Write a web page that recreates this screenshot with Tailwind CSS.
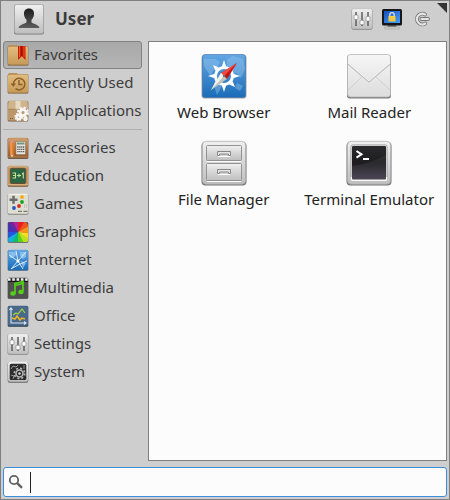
<!DOCTYPE html>
<html lang="en">
<head>
<meta charset="utf-8">
<meta name="viewport" content="width=device-width, initial-scale=1">
<title>Applications</title>
<script src="https://cdn.jsdelivr.net/npm/@tailwindcss/browser@4"></script>
</head>
<body class="bg-[#cecece] font-['Noto_Sans',sans-serif] text-[15px] leading-5 text-[#3c3c3c]">
<svg class="absolute size-0" aria-hidden="true">
  <defs>
    <linearGradient id="silver" x1="0" y1="0" x2="0" y2="1"><stop offset="0" stop-color="#f0f0f0"/><stop offset="1" stop-color="#bebebe"/></linearGradient>
    <linearGradient id="paper" x1="0" y1="0" x2="0" y2="1"><stop offset="0" stop-color="#f6f6f6"/><stop offset="1" stop-color="#dcdcdc"/></linearGradient>
    <linearGradient id="tan" x1="0" y1="0" x2="0" y2="1"><stop offset="0" stop-color="#e2bd80"/><stop offset="1" stop-color="#c69a58"/></linearGradient>
    <linearGradient id="wood" x1="0" y1="0" x2="0" y2="1"><stop offset="0" stop-color="#c99a68"/><stop offset="1" stop-color="#94592c"/></linearGradient>
    <linearGradient id="blue" x1="0" y1="0" x2="0" y2="1"><stop offset="0" stop-color="#62a7e4"/><stop offset="1" stop-color="#1b6cb8"/></linearGradient>
    <linearGradient id="dark" x1="0" y1="0" x2="0" y2="1"><stop offset="0" stop-color="#2a2a2c"/><stop offset=".5" stop-color="#1d1c20"/><stop offset="1" stop-color="#423c4c"/></linearGradient>
    <linearGradient id="person" x1="0" y1="0" x2="0" y2="1"><stop offset="0" stop-color="#1c1c1c"/><stop offset="1" stop-color="#5c5c5c"/></linearGradient>
    <linearGradient id="screen" x1="0" y1="0" x2="1" y2="1"><stop offset="0" stop-color="#1550bd"/><stop offset="1" stop-color="#4ba0f7"/></linearGradient>
    <clipPath id="tile"><rect x="1" y="1" width="20" height="20" rx="1.5"/></clipPath>
    <symbol id="sliders" viewBox="0 0 22 22">
      <rect x=".5" y="1.2" width="21" height="20.6" rx="2" fill="#777"/>
      <rect x=".7" y=".7" width="20.6" height="20.3" rx="2" fill="url(#silver)" stroke="#b2b2b2" stroke-width=".5"/>
      <path d="M5 4v14M11 4v14M17 4v14" stroke="#555" stroke-width="1.4"/>
      <g fill="#fff" stroke="#777" stroke-width=".6"><rect x="3" y="7" width="4" height="4.500" rx="1"/><rect x="9" y="12.200" width="4" height="4.500" rx="1"/><rect x="15" y="8.600" width="4" height="4.500" rx="1"/></g>
    </symbol>
  </defs>
</svg>

<main class="relative flex min-h-screen flex-col border border-[#7f7f7f] px-0.5 pb-0.5">
  <header class="flex h-10 items-center pr-3.5 pb-1 pl-2.5">
    <svg class="h-8 w-8 shrink-0" viewBox="0 0 32 32" aria-hidden="true">
      <rect x="1" y="2" width="30" height="29.5" rx="2" fill="#777"/>
      <rect x="1.5" y="1.5" width="29" height="29" rx="2" fill="url(#silver)" stroke="#a6a6a6" stroke-width=".8"/>
      <path d="M16 5.500c-3.500 0-5.300 2.400-5 5.800.1 2.300 1.100 4.200 2.500 5.400v2.500c-.5 1.600-7.500 2-8 5.800h21c-.5-3.800-7.500-4.200-8-5.800v-2.500c1.400-1.200 2.400-3.100 2.500-5.400.3-3.400-1.500-5.800-5-5.800z" fill="url(#person)"/>
    </svg>
    <h1 class="ml-2.5 grow text-[17px] leading-6 font-bold">User</h1>
    <div class="flex gap-2">
      <button type="button" aria-label="Settings Manager"><svg class="block size-[22px]" aria-hidden="true"><use href="#sliders"/></svg></button>
      <button type="button" aria-label="Lock Screen">
        <svg class="block size-[22px]" viewBox="0 0 22 22" aria-hidden="true">
          <path d="M7 17h8l1 3.500H6z" fill="#777"/><rect x="3.500" y="19" width="15" height="1.900" rx=".9" fill="#d8d8cf" stroke="#888" stroke-width=".5"/>
          <rect x="1" y="1" width="20" height="16.500" rx="1.500" fill="#171717"/><rect x="3" y="3" width="16" height="12" fill="url(#screen)"/>
          <path d="M8.800 9V6.800a2.200 2.200 0 0 1 4.400 0V9" fill="none" stroke="#ddd" stroke-width="1.300"/><rect x="7.500" y="8" width="7" height="5.500" rx=".6" fill="#f8d348"/><path d="M8 10h6M8 12h6" stroke="#e2ae2b" stroke-width=".6"/>
        </svg>
      </button>
      <button type="button" aria-label="Log Out">
        <svg class="block size-[22px]" viewBox="0 0 22 22" aria-hidden="true" fill="none">
          <path d="M14 6.500a5.300 5.300 0 1 0 .2 9M10.500 11h6.500" stroke="#777" stroke-width="3.800" stroke-linecap="round"/>
          <path d="M14 6.500a5.300 5.300 0 1 0 .2 9M10.500 11h6.500" stroke="#e4e4e4" stroke-width="2.100" stroke-linecap="round"/>
        </svg>
      </button>
    </div>
    <svg class="absolute top-0.5 right-0.5 size-2.5" viewBox="0 0 10 10" aria-hidden="true"><path d="M0 0h10v10z" fill="#333"/></svg>
  </header>

  <div class="flex grow">
    <nav class="w-[139px] shrink-0" aria-label="Categories">
      <button type="button" class="flex h-7 w-full items-center gap-[5px] rounded-[3px] border border-[#838383] bg-linear-to-b from-[#a8a8a8] to-[#b5b5b5] pl-[3px] whitespace-nowrap" aria-pressed="true">
        <svg class="size-[22px] shrink-0" viewBox="0 0 22 22" aria-hidden="true">
          <path d="M1 2.500 2 1h8l1 1.500h10V21H1z" fill="#ba9158"/><rect x=".7" y="2.500" width="20.600" height="19" rx="1" fill="#765126"/><rect x="1" y="2.500" width="20" height="18.200" rx="1" fill="url(#tan)"/>
          <path d="M11 2h7.500v14l-3.700-3.700L11 16z" fill="#c81b08"/><path d="M12.500 2v11M17 2v11" stroke="#f0581d"/><path d="M14.700 2v10" stroke="#8e1408"/>
        </svg><span class="pb-0.5">Favorites</span>
      </button>
      <button type="button" class="flex h-7 w-full items-center gap-[5px] pl-1 whitespace-nowrap">
        <svg class="size-[22px] shrink-0" viewBox="0 0 22 22" aria-hidden="true">
          <path d="M1 2.500 2 1h8l1 1.500h10V21H1z" fill="#ba9158"/><rect x=".7" y="2.500" width="20.600" height="19" rx="1" fill="#765126"/><rect x="1" y="2.500" width="20" height="18.200" rx="1" fill="url(#tan)"/>
          <path d="M6.300 12a5.800 5.800 0 1 1 2.200 4.700M12 8v4.500h3.500" fill="none" stroke="#8c6128" stroke-width="1.500"/><path d="M3.500 11.500h5.600l-2.800 3.300z" fill="#8c6128"/>
        </svg><span class="pb-0.5">Recently Used</span>
      </button>
      <button type="button" class="flex h-7 w-full items-center gap-[5px] pl-1 whitespace-nowrap">
        <svg class="size-[22px] shrink-0" viewBox="0 0 22 22" aria-hidden="true">
          <rect x=".7" y="1" width="20.600" height="20.500" rx="1.500" fill="#765b3c"/><rect x="1" y=".7" width="20" height="20" rx="1.500" fill="#bb9769"/><path d="M2 1h18l1 8H1z" fill="#ceb38d"/><path d="M8.500 1h5v9h-5z" fill="#e7dac2"/><path d="M1 9.300h20" stroke="#a27c4c" stroke-width=".7"/><path d="M3 18.500h5" stroke="#765b3c" stroke-dasharray="1 1"/>
          <g fill="none" stroke="#f7f7f7"><circle cx="16" cy="12.500" r="3" stroke-width="2.800"/><circle cx="16" cy="12.500" r="5" stroke-width="2" stroke-dasharray="2.200 1.727"/><circle cx="11.500" cy="17" r="2" stroke-width="2.400"/><circle cx="11.500" cy="17" r="3.500" stroke-width="1.500" stroke-dasharray="1.600 1.149"/><circle cx="18.500" cy="19" r="1.300" stroke-width="2"/></g>
        </svg><span class="pb-0.5">All Applications</span>
      </button>
      <hr class="mt-1 mb-1 border-[#b0b0b0]">
      <button type="button" class="flex h-7 w-full items-center gap-[5px] pl-1 whitespace-nowrap">
        <svg class="size-[22px] shrink-0" viewBox="0 0 22 22" aria-hidden="true">
          <rect x=".7" y="1" width="20.600" height="20.800" rx="1.500" fill="#54361e"/><rect x="1" y=".8" width="20" height="20" rx="1.500" fill="url(#wood)"/><path d="M1 3h20M1 20h20" stroke="#d3ac7b" stroke-width=".6"/>
          <path d="M3.500 6h3v12h-3z" fill="#f27b20"/><path d="M3.500 6h1v12h-1z" fill="#ffad62"/><path d="M3.500 3h3v3h-3z" fill="#e88e89"/><path d="m3.500 18 1.500 2.500L6.500 18z" fill="#f1d6a4"/>
          <rect x="9" y="4.500" width="9.500" height="13" rx=".7" fill="#e8e6df" stroke="#806e59" stroke-width=".5"/><path d="M10 6.500h7.500" stroke="#719679" stroke-width="2"/><path d="M10.300 10h7M10.300 12.300h7M10.300 14.600h7" stroke="#555" stroke-width="1.300" stroke-dasharray="1.300 .6"/>
        </svg><span class="pb-0.5">Accessories</span>
      </button>
      <button type="button" class="flex h-7 w-full items-center gap-[5px] pl-1 whitespace-nowrap">
        <svg class="size-[22px] shrink-0" viewBox="0 0 22 22" aria-hidden="true">
          <rect x=".7" y="1" width="20.600" height="20.800" rx="1.500" fill="#75502e"/><rect x="1" y=".8" width="20" height="20" rx="1.500" fill="#c79665"/><path d="M1 2h20M1 19.700h20" stroke="#dfbb8f" stroke-width=".8"/>
          <rect x="3.300" y="3.300" width="15.400" height="15.200" rx="1.500" fill="#2c6544" stroke="#684a2d"/>
          <path d="M5.500 8h3v5h-3M6 10.500h2.500M10 10.500h4M12 8.700v3.600M15 9l1.300-1v5.500" fill="none" stroke="#c6e594" stroke-width="1.100"/>
        </svg><span class="pb-0.5">Education</span>
      </button>
      <button type="button" class="flex h-7 w-full items-center gap-[5px] pl-1 whitespace-nowrap">
        <svg class="size-[22px] shrink-0" viewBox="0 0 22 22" aria-hidden="true">
          <rect x=".7" y="1" width="20.600" height="20.800" rx="1.500" fill="#85857b"/><rect x="1" y=".8" width="20" height="20" rx="1.500" fill="#deded2"/><path d="M1.500 1.500h19" stroke="#f4f4eb"/>
          <path d="M6.500 2.800v8M2.500 6.800h8" stroke="#6d6d6d" stroke-width="2.500"/>
          <circle cx="15" cy="4" r="1.900" fill="#f1ab1b"/><circle cx="15" cy="9" r="1.900" fill="#18a51e"/><circle cx="12" cy="13" r="1.900" fill="#d82b1a"/><circle cx="7" cy="15" r="1.900" fill="#2156c4"/><path d="M11 18.300h4M16.500 18.300h4" stroke="#77776e" stroke-width="1.300"/><path d="M17 12h3M17 14h3" stroke="#aaa" stroke-dasharray="1 1"/>
        </svg><span class="pb-0.5">Games</span>
      </button>
      <button type="button" class="flex h-7 w-full items-center gap-[5px] pl-1 whitespace-nowrap">
        <svg class="size-[22px] shrink-0" viewBox="0 0 22 22" aria-hidden="true">
          <rect x=".7" y="1" width="20.600" height="20.800" rx="1.500" fill="#555"/>
          <g clip-path="url(#tile)"><path fill="#742696" d="M11 11 1 1h6z"/><path fill="#b52496" d="M11 11 6 0h6z"/><path fill="#e3202a" d="M11 11 11 0h8z"/><path fill="#f4511e" d="M11 11 18 0l4 5z"/><path fill="#fb951b" d="m11 11 11-6v7z"/><path fill="#fadf21" d="m11 11 11 1v7z"/><path fill="#bddf1c" d="m11 11 11 7v4h-6z"/><path fill="#53d31f" d="m11 11 6 11h-7z"/><path fill="#13bb67" d="m11 11 0 11H4z"/><path fill="#14b0d9" d="M11 11 5 22H0v-5z"/><path fill="#2457dd" d="M11 11 0 18v-8z"/><path fill="#4931b3" d="M11 11 0 11V0z"/></g>
        </svg><span class="pb-0.5">Graphics</span>
      </button>
      <button type="button" class="flex h-7 w-full items-center gap-[5px] pl-1 whitespace-nowrap">
        <svg class="size-[22px] shrink-0" viewBox="0 0 22 22" aria-hidden="true">
          <rect x=".7" y="1" width="20.600" height="20.800" rx="1.500" fill="#3b6086"/><rect x="1" y=".8" width="20" height="20" rx="1.500" fill="url(#blue)"/>
          <path d="M2 3h6l2 2-4 4H3zM13 3h6v5l-3 2-3-3zM14 12l5 2-3 5z" fill="#9bcaf2" opacity=".75"/>
          <path d="m2 6 9 6 8-9M11 12l-7 8M11 12l5 8M11 12 9 2M4 20l7-4 9-4" fill="none" stroke="#e7f4ff" stroke-width=".9"/><circle cx="11" cy="12" r="1.600" fill="#fff"/>
        </svg><span class="pb-0.5">Internet</span>
      </button>
      <button type="button" class="flex h-7 w-full items-center gap-[5px] pl-1 whitespace-nowrap">
        <svg class="size-[22px] shrink-0" viewBox="0 0 22 22" aria-hidden="true">
          <rect x=".7" y=".7" width="20.600" height="21" rx="1.500" fill="#333"/><rect x="1" y="5" width="20" height="16" fill="#505050"/><path d="M1 2.500h20" stroke="#f3f3f3" stroke-width="2.400" stroke-dasharray="2.500 1.800"/><path d="M1 4.500h20" stroke="#161616"/>
          <path d="M8 16V6.500l8-2V14M8 8.500l8-2" fill="none" stroke="#52cf19" stroke-width="1.700"/><ellipse cx="6" cy="16.500" rx="2.700" ry="2.200" fill="#52cf19"/><ellipse cx="14" cy="15" rx="2.700" ry="2.200" fill="#52cf19"/>
        </svg><span class="pb-0.5">Multimedia</span>
      </button>
      <button type="button" class="flex h-7 w-full items-center gap-[5px] pl-1 whitespace-nowrap">
        <svg class="size-[22px] shrink-0" viewBox="0 0 22 22" aria-hidden="true">
          <rect x=".7" y="1" width="20.600" height="20.800" rx="1.500" fill="#283a4d"/><rect x="1" y=".8" width="20" height="20" rx="1.500" fill="#49698b"/>
          <path d="M4 3v15h15M2.500 5 4 3l1.500 2M17 16.500l2 1.500-2 1.500" fill="none" stroke="#dbe6ef" stroke-width="1.100"/>
          <path d="m6 10 3-2 2 1 4-5 3 4" fill="none" stroke="#a8d53e" stroke-width="1.200"/><path d="m5 13 3 1 2-3 3 4 2-2 3 1" fill="none" stroke="#efb525" stroke-width="1.500"/>
        </svg><span class="pb-0.5">Office</span>
      </button>
      <button type="button" class="flex h-7 w-full items-center gap-[5px] pl-1 whitespace-nowrap">
        <svg class="size-[22px] shrink-0" aria-hidden="true"><use href="#sliders"/></svg><span class="pb-0.5">Settings</span>
      </button>
      <button type="button" class="flex h-7 w-full items-center gap-[5px] pl-1 whitespace-nowrap">
        <svg class="size-[22px] shrink-0" viewBox="0 0 22 22" aria-hidden="true">
          <rect x=".7" y="1" width="20.600" height="20.800" rx="2" fill="#666"/><rect x="1" y=".8" width="20" height="20" rx="2" fill="url(#silver)"/><rect x="2.700" y="2.700" width="16.600" height="16.300" rx="1.500" fill="#2c2c2c"/>
          <g fill="none" stroke="#b5b5b5"><circle cx="12.500" cy="12.500" r="3.500" stroke-width="1.600"/><circle cx="12.500" cy="12.500" r="5.200" stroke-width="1.700" stroke-dasharray="2 2.084"/><path d="m4 8 2-3 3 1 2-2M4 14l3 1-1 3M17 4v4" stroke="#929292"/></g><circle cx="12.500" cy="12.500" r="1.200" fill="#ddd"/>
        </svg><span class="pb-0.5">System</span>
      </button>
    </nav>

    <section class="ml-1.5 grow border border-[#7f7f7f] bg-[#fcfcfc] pt-2.5 pr-1 pl-0.5" aria-label="Favorites">
      <div class="grid grid-cols-2 gap-y-[7px] text-[#222]">
        <button type="button" class="flex h-20 flex-col items-center gap-0.5 whitespace-nowrap">
          <svg class="size-12 shrink-0" viewBox="0 0 48 48" aria-hidden="true">
            <rect x="1.500" y="3" width="45" height="43.500" rx="3" fill="#777" opacity=".65"/><rect x="2.500" y="2.500" width="43" height="43" rx="2.500" fill="url(#blue)" stroke="#477aac" stroke-width=".7"/>
            <path d="M4 7h11l5 3-3 7-4 2-2 6-4-6-3-5zM27 7l6-3 10 3 2 10-4 9-5-5-5 2-4-7zM17 27l6 3-2 6-4 7-3-9zM37 31l6 3-3 5-5-3z" fill="#9cc8ee" opacity=".4"/>
            <circle cx="24" cy="24" r="8.500" fill="none" stroke="#fff" stroke-width="3"/>
            <path d="m24 8 2.500 7.500h-5zM24 40l2.500-7.500h-5zM8 24l7.500-2.500v5zM40 24l-7.500-2.500v5zM13 13l6 2.500-3.500 3.500zM35 35l-6-2.500 3.500-3.500zM35 13l-6 2.500 3.500 3.500zM13 35l6-2.500-3.500-3.500z" fill="#fff"/>
            <path d="m37 11-16 10 6 6z" fill="#c51616"/><path d="m37 11-16 10 3 3z" fill="#f14a40"/><path d="m11 38 16-11-6-6z" fill="#bfc2bd"/><path d="m11 38 10-17 3 3z" fill="#f3f3ef"/><circle cx="24" cy="24" r="1.200" fill="#777"/>
          </svg><span>Web Browser</span>
        </button>
        <button type="button" class="flex h-20 flex-col items-center gap-0.5 whitespace-nowrap">
          <svg class="size-12 shrink-0" viewBox="0 0 48 48" aria-hidden="true">
            <rect x="2" y="3" width="44" height="43.500" rx="3" fill="#777"/><rect x="2.500" y="2.500" width="43" height="42.500" rx="3" fill="url(#paper)" stroke="#b5b5b5" stroke-width=".8"/>
            <path d="m3 38 15-14M45 38 30 24" stroke="#cfcfcf"/><path d="m3 12 21 18 21-18" fill="none" stroke="#bcbcbc" stroke-width="1.200"/><path d="m3 11 21 18 21-18" fill="none" stroke="#fafafa" stroke-width=".7"/>
          </svg><span>Mail Reader</span>
        </button>
        <button type="button" class="flex h-20 flex-col items-center gap-0.5 whitespace-nowrap">
          <svg class="size-12 shrink-0" viewBox="0 0 48 48" aria-hidden="true">
            <rect x="1.500" y="3" width="45" height="43.500" rx="4" fill="#777"/><rect x="2.300" y="2.300" width="43.400" height="43" rx="4" fill="url(#silver)" stroke="#a5a5a5" stroke-width=".7"/>
            <g fill="url(#silver)" stroke="#929292"><rect x="6.500" y="6.500" width="35" height="15" rx="1"/><rect x="6.500" y="24.500" width="35" height="17" rx="1"/></g><path d="M7 22.500h34M7 42.500h34" stroke="#fafafa"/>
            <g fill="#e8e8e8" stroke="#858585"><path d="M17.500 12.500h13v4h-2v-1.500h-9v1.500h-2zM17.500 30.500h13v4h-2v-1.500h-9v1.500h-2z"/></g><path d="M18 17.500h12M18 35.500h12" stroke="#fff"/>
          </svg><span>File Manager</span>
        </button>
        <button type="button" class="flex h-20 flex-col items-center gap-0.5 whitespace-nowrap">
          <svg class="size-12 shrink-0" viewBox="0 0 48 48" aria-hidden="true">
            <rect x="1.500" y="3" width="45" height="43.500" rx="4" fill="#777"/><rect x="2.300" y="2.300" width="43.400" height="43" rx="4" fill="url(#silver)" stroke="#a5a5a5" stroke-width=".7"/>
            <rect x="6" y="6" width="36" height="36" rx="1.500" fill="#fafafa"/><path d="M6 38V7.500Q6 6 7.500 6h33Q42 6 42 7.500V38" fill="none" stroke="#999"/><rect x="7" y="7" width="34" height="33.500" rx="1" fill="url(#dark)"/><path d="M7 27q17-2 34-11v24H7z" fill="#fff" opacity=".06"/>
            <path d="m11.500 12 5 3.300-5 3.300" fill="none" stroke="#fff" stroke-width="2"/><path d="M18 20h6" stroke="#fff" stroke-width="2"/>
          </svg><span>Terminal Emulator</span>
        </button>
      </div>
    </section>
  </div>

  <label class="mt-1.5 flex h-[30px] items-center rounded-[3px] border border-[#3c8cdc] bg-[#fcfcfc] pl-1">
    <svg class="size-4 shrink-0" viewBox="0 0 16 16" aria-hidden="true" fill="none" stroke="#606060"><circle cx="6" cy="6" r="4.200" stroke-width="1.800"/><path d="m9.200 9.200 4.800 4.600" stroke-width="2.400"/></svg>
    <span class="ml-1.5 h-[21px] w-px shrink-0 bg-[#222]"></span>
    <input type="text" aria-label="Search applications" class="h-full min-w-0 grow bg-transparent caret-transparent outline-none">
  </label>
</main>
</body>
</html>
